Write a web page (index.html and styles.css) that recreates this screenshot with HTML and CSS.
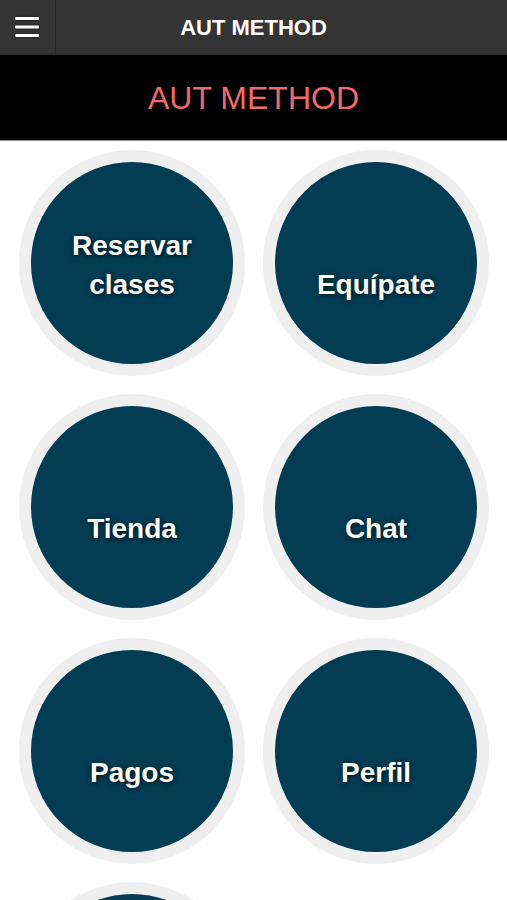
FILE: index.html
```html
<!DOCTYPE html>
<html lang="es">
<head>
<meta charset="utf-8">
<title>AUT METHOD</title>
<link rel="stylesheet" href="styles.css">
</head>
<body>
<header class="topbar">
  <button class="menu-btn" aria-label="Menú">
    <svg width="24" height="20" viewBox="0 0 24 20" aria-hidden="true">
      <rect x="0" y="0" width="24" height="3" rx="1" fill="#fff"/>
      <rect x="0" y="8.5" width="24" height="3" rx="1" fill="#fff"/>
      <rect x="0" y="17" width="24" height="3" rx="1" fill="#fff"/>
    </svg>
  </button>
  <h1 class="topbar-title">AUT METHOD</h1>
</header>
<div class="brand">AUT METHOD</div>
<main class="grid">
  <div class="cell"><a class="circle"><span class="label">Reservar<br>clases</span></a></div>
  <div class="cell"><a class="circle"><span class="label">Equípate</span></a></div>
  <div class="cell"><a class="circle"><span class="label">Tienda</span></a></div>
  <div class="cell"><a class="circle"><span class="label">Chat</span></a></div>
  <div class="cell"><a class="circle"><span class="label">Pagos</span></a></div>
  <div class="cell"><a class="circle"><span class="label">Perfil</span></a></div>
  <div class="cell"><a class="circle"></a></div>
  <div class="cell"></div>
</main>
</body>
</html>
```
FILE: styles.css
```css
* { box-sizing: border-box; }
html, body { margin: 0; padding: 0; }
body {
  width: 507px;
  height: 900px;
  overflow: hidden;
  background: #fff;
  font-family: "Liberation Sans", Arial, sans-serif;
}
.topbar {
  position: relative;
  height: 55px;
  background: #343434;
  display: flex;
  align-items: center;
  border-bottom: 1px solid #2a2a2a;
}
.menu-btn {
  width: 56px;
  height: 55px;
  padding: 0;
  margin: 0;
  background: transparent;
  border: 0;
  border-right: 1px solid #262626;
  display: flex;
  align-items: center;
  justify-content: center;
  flex: none;
}
.menu-btn svg { display: block; filter: drop-shadow(0 0 1px rgba(0,0,0,.6)); margin-right: 1px; }
.topbar-title {
  position: absolute;
  left: 0;
  right: 0;
  top: 0;
  margin: 0;
  line-height: 55px;
  text-align: center;
  color: #fff;
  font-size: 22px;
  font-weight: bold;
  pointer-events: none;
}
.brand {
  height: 86px;
  background: #000;
  color: #ef6a6c;
  font-size: 32px;
  text-align: center;
  line-height: 86px;
  border-bottom: 1px solid #8a8a8a;
}
.grid {
  display: grid;
  grid-template-columns: 244px 244px;
  grid-auto-rows: 244px;
  padding: 9px 9px 0 10px;
}
.cell {
  display: flex;
  justify-content: center;
}
.circle {
  width: 226px;
  height: 226px;
  border-radius: 50%;
  background: #023d54;
  border: 12px solid #efefef;
  display: flex;
  flex-direction: column;
  justify-content: flex-end;
  align-items: center;
  padding-bottom: 60px;
  text-decoration: none;
}
.label {
  color: #fff;
  font-size: 28px;
  font-weight: bold;
  line-height: 39px;
  text-align: center;
  text-shadow: 0 1px 5px rgba(0,0,0,.75);
}
```
